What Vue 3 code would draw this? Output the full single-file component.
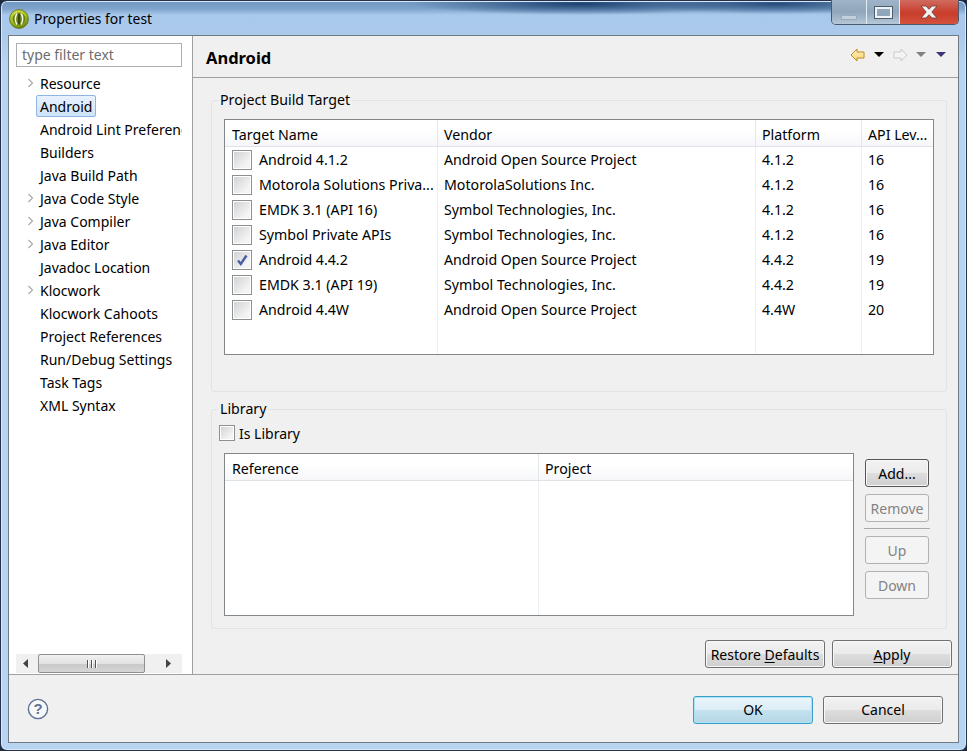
<template>
  <div class="window">
    <!-- Title bar -->
    <div class="titlebar">
      <svg class="app-icon" width="20" height="20" viewBox="0 0 20 20">
        <defs>
          <radialGradient id="orb" cx="40%" cy="25%" r="80%">
            <stop offset="0" stop-color="#dfe94f" />
            <stop offset="0.6" stop-color="#a3bf1a" />
            <stop offset="1" stop-color="#5b7a0c" />
          </radialGradient>
        </defs>
        <circle cx="10" cy="10" r="9.4" fill="url(#orb)" stroke="#5f6d14" stroke-width="0.8" />
        <circle cx="10" cy="10" r="6.4" fill="#69801a" />
        <path d="M8 4.5 C5.8 7.5 5.8 12.5 8 15.5" fill="none" stroke="#f4f7e4" stroke-width="1.5" />
        <path d="M12 4.5 C14.2 7.5 14.2 12.5 12 15.5" fill="none" stroke="#f4f7e4" stroke-width="1.5" />
        <path d="M10 5 V15" stroke="#3a4a0a" stroke-width="2" />
      </svg>
      <span class="title">Properties for test</span>
      <div class="win-controls">
        <div class="wc wc-min"><span class="min-glyph"></span></div>
        <div class="wc wc-max"><span class="max-glyph"></span></div>
        <div class="wc wc-close">
          <svg width="20" height="14" viewBox="0 0 20 14">
            <path d="M2 1 H7 L10 4.3 L13 1 H18 L12.8 7 L18 13 H13 L10 9.7 L7 13 H2 L7.2 7 Z" fill="#f1f1f1" stroke="#6d3a33" stroke-width="0.8" />
          </svg>
        </div>
      </div>
    </div>

    <div class="client">
      <div class="main">
        <!-- Left tree -->
        <aside class="sidebar">
          <div class="filter">type filter text</div>
          <ul class="tree">
            <li v-for="item in tree" :key="item.label" class="tree-row">
              <span class="twisty">
                <svg v-if="item.arrow" width="7" height="10" viewBox="0 0 7 10">
                  <path d="M1.5 1 L5.5 5 L1.5 9" fill="none" stroke="#a6a6a6" stroke-width="1.1" />
                </svg>
              </span>
              <span :class="['tree-label', { selected: item.selected }]">{{ item.label }}</span>
            </li>
          </ul>
          <div class="hscroll">
            <svg width="7" height="9" viewBox="0 0 7 9"><path d="M6 0 V9 L1 4.5 Z" fill="#444" /></svg>
            <div class="hthumb">
              <span class="grip"></span><span class="grip"></span><span class="grip"></span>
            </div>
            <svg width="7" height="9" viewBox="0 0 7 9"><path d="M1 0 V9 L6 4.5 Z" fill="#444" /></svg>
          </div>
        </aside>

        <!-- Right page -->
        <section class="page">
          <div class="page-head">
            <h1>Android</h1>
            <div class="page-tools">
              <svg width="15" height="14" viewBox="0 0 15 14">
                <defs>
                  <linearGradient id="back" x1="0" y1="0" x2="0" y2="1">
                    <stop offset="0" stop-color="#fff3c4" />
                    <stop offset="1" stop-color="#f9d270" />
                  </linearGradient>
                </defs>
                <path d="M7 1 L1 7 L7 13 V10 H14 V4 H7 Z" fill="url(#back)" stroke="#c08a1e" stroke-width="1" />
              </svg>
              <span class="caret black"></span>
              <svg class="fwd" width="15" height="14" viewBox="0 0 15 14">
                <path d="M8 1 L14 7 L8 13 V10 H1 V4 H8 Z" fill="#f4f4f4" stroke="#c9c9c9" stroke-width="1" />
              </svg>
              <span class="caret grey"></span>
              <span class="caret navy"></span>
            </div>
          </div>

          <div class="page-body">
            <fieldset class="group group-target">
              <legend>Project Build Target</legend>
              <div class="group-inner target-inner">
                <div class="table target-table">
                  <div class="thead target-cols">
                    <div v-for="c in targetCols" :key="c" class="th">{{ c }}</div>
                  </div>
                  <div class="tbody target-body">
                    <div class="guides target-cols">
                      <div v-for="c in targetCols" :key="c" class="guide"></div>
                    </div>
                    <div v-for="t in targets" :key="t.name" class="tr target-cols">
                      <div class="td name-cell">
                        <span :class="['check', { on: t.checked }]">
                          <svg v-if="t.checked" width="14" height="14" viewBox="0 0 14 14">
                            <path d="M3 7.5 L5.8 11 L11.5 2.5" fill="none" stroke="#4a5fa8" stroke-width="2.4" />
                          </svg>
                        </span>
                        {{ t.name }}
                      </div>
                      <div class="td">{{ t.vendor }}</div>
                      <div class="td">{{ t.platform }}</div>
                      <div class="td">{{ t.api }}</div>
                    </div>
                  </div>
                </div>
              </div>
            </fieldset>

            <fieldset class="group group-library">
              <legend>Library</legend>
              <div class="group-inner library-inner">
                <label class="is-library"><span class="check small"></span>Is Library</label>
                <div class="library-row">
                  <div class="table lib-table">
                    <div class="thead lib-cols">
                      <div class="th">Reference</div>
                      <div class="th">Project</div>
                    </div>
                    <div class="tbody lib-body lib-cols">
                      <div class="guide"></div>
                      <div class="guide"></div>
                    </div>
                  </div>
                  <div class="side-buttons">
                    <button class="btn btn-side btn-add">Add...</button>
                    <button class="btn btn-side" disabled>Remove</button>
                    <div class="side-sep"></div>
                    <button class="btn btn-side" disabled>Up</button>
                    <button class="btn btn-side" disabled>Down</button>
                  </div>
                </div>
              </div>
            </fieldset>
          </div>

          <div class="page-actions">
            <button class="btn btn-wide">Restore <u>D</u>efaults</button>
            <button class="btn btn-wide"><u>A</u>pply</button>
          </div>
        </section>
      </div>

      <!-- Footer -->
      <div class="footer">
        <svg class="help" width="22" height="22" viewBox="0 0 22 22">
          <circle cx="11" cy="11" r="9.6" fill="#f7f8fa" stroke="#5f7295" stroke-width="1.4" />
          <text x="11" y="16" text-anchor="middle" class="help-q">?</text>
        </svg>
        <div class="footer-buttons">
          <button class="btn btn-wide btn-default">OK</button>
          <button class="btn btn-wide">Cancel</button>
        </div>
      </div>
    </div>
  </div>
</template>

<script setup>
const tree = [
  { label: 'Resource', arrow: true },
  { label: 'Android', selected: true },
  { label: 'Android Lint Preferences' },
  { label: 'Builders' },
  { label: 'Java Build Path' },
  { label: 'Java Code Style', arrow: true },
  { label: 'Java Compiler', arrow: true },
  { label: 'Java Editor', arrow: true },
  { label: 'Javadoc Location' },
  { label: 'Klocwork', arrow: true },
  { label: 'Klocwork Cahoots' },
  { label: 'Project References' },
  { label: 'Run/Debug Settings' },
  { label: 'Task Tags' },
  { label: 'XML Syntax' },
]

const targetCols = ['Target Name', 'Vendor', 'Platform', 'API Lev...']

const targets = [
  { name: 'Android 4.1.2', vendor: 'Android Open Source Project', platform: '4.1.2', api: 16 },
  { name: 'Motorola Solutions Priva...', vendor: 'MotorolaSolutions Inc.', platform: '4.1.2', api: 16 },
  { name: 'EMDK 3.1 (API 16)', vendor: 'Symbol Technologies, Inc.', platform: '4.1.2', api: 16 },
  { name: 'Symbol Private APIs', vendor: 'Symbol Technologies, Inc.', platform: '4.1.2', api: 16 },
  { name: 'Android 4.4.2', vendor: 'Android Open Source Project', platform: '4.4.2', api: 19, checked: true },
  { name: 'EMDK 3.1 (API 19)', vendor: 'Symbol Technologies, Inc.', platform: '4.4.2', api: 19 },
  { name: 'Android 4.4W', vendor: 'Android Open Source Project', platform: '4.4W', api: 20 },
]
</script>

<style>
html, body { margin: 0; background: #1d2a3d; overflow: hidden; }
</style>

<style scoped>
* { box-sizing: border-box; }

.window {
  width: 967px;
  height: 751px;
  padding: 0 7px 7px 7px;
  display: flex;
  flex-direction: column;
  border: 1px solid #25324a;
  border-radius: 7px;
  background:
    radial-gradient(ellipse 170px 11px at 580px 3px, rgba(24, 62, 108, 0.95), transparent),
    radial-gradient(ellipse 130px 10px at 775px 3px, rgba(24, 62, 108, 0.85), transparent),
    linear-gradient(#6f97c2 0, #7fa4cc 8px, #a9c9ec 14px, #abc9ea 34px, #b7d4f0 60px, #b7d4f0 100%);
  font-family: "Noto Sans", sans-serif;
  font-size: 14px;
  color: #000;
  box-shadow: inset 0 0 0 1px #d7e8f8;
}

/* TITLE BAR */
.titlebar {
  height: 34px;
  flex: none;
  display: flex;
  align-items: center;
  position: relative;
}
.app-icon { margin: 2px 0 0 1px; }
.title { margin-left: 5px; color: #000; font-size: 13.9px; }
.win-controls {
  position: absolute;
  top: -1px;
  right: 0;
  display: flex;
  height: 25px;
  border: 1px solid #4a5a6c;
  border-top: none;
  border-radius: 0 0 5px 5px;
  overflow: hidden;
}
.wc { display: flex; align-items: center; justify-content: center; }
.wc-min, .wc-max {
  width: 35px;
  background: linear-gradient(#9fb4c8, #8fa6bb 50%, #b6c8d8);
  border-right: 1px solid #e4ecf3;
}
.wc-max { width: 33px; }
.wc-close { width: 58px; background: linear-gradient(#cf6b5e, #c93c2a 55%, #d3533f); }
.min-glyph { width: 16px; height: 5px; margin-top: 10px; background: #c2d0dd; border: 1px solid #9aaabb; }
.max-glyph { width: 17px; height: 11px; border: 2px solid #eef3f7; outline: 1px solid #4d5d6e; background: #8fa6bb; }

/* CLIENT */
.client {
  flex: 1;
  display: flex;
  flex-direction: column;
  min-height: 0;
  background: #f0f0f0;
  border: 1px solid #6f7a85;
}
.main { flex: 1; display: flex; min-height: 0; }

/* SIDEBAR */
.sidebar {
  width: 184px;
  flex: none;
  background: #fff;
  border-right: 1px solid #a0a0a0;
  padding: 7px 9px 1px 7px;
  display: flex;
  flex-direction: column;
  overflow: hidden;
}
.filter {
  height: 24px;
  width: 166px;
  flex: none;
  border: 1px solid #abadb3;
  padding-left: 5px;
  line-height: 22px;
  color: #6d6d6d;
}
.tree { list-style: none; margin: 4px 0 0 0; padding: 0; flex: 1; min-height: 0; width: 166px; overflow: hidden; }
.tree-row { height: 23px; display: flex; align-items: center; white-space: nowrap; }
.twisty { width: 20px; flex: none; padding-left: 11px; display: flex; align-items: center; }
.tree-label { padding: 0 3px; line-height: 21px; height: 22px; border: 1px solid transparent; border-radius: 2px; }
.tree-label.selected { background: linear-gradient(#e8f2fd, #cfe3fb); border-color: #8fb6e3; }

.hscroll {
  height: 19px;
  width: 166px;
  flex: none;
  background: #f0f0f0;
  display: flex;
  align-items: center;
  justify-content: space-between;
  padding: 0 10px 0 6px;
}
.hthumb {
  width: 107px;
  height: 19px;
  margin-left: 9px;
  margin-right: auto;
  border: 1px solid #8e8f8f;
  border-radius: 2px;
  background: linear-gradient(#f1f1f1, #e2e2e2 50%, #c9c9c9 55%, #d6d6d6);
  display: flex;
  align-items: center;
  justify-content: center;
  gap: 2px;
}
.grip { width: 1px; height: 8px; background: #555; border-right: 1px solid #fff; box-sizing: content-box; }

/* PAGE */
.page { flex: 1; min-width: 0; display: flex; flex-direction: column; }
.page-head {
  height: 42px;
  flex: none;
  display: flex;
  align-items: center;
  justify-content: space-between;
  padding: 0 12px 0 13px;
  border-bottom: 1px solid #a0a0a0;
}
h1 { margin: 2px 0 0; font-size: 16.5px; font-weight: 700; color: #000; }
.page-tools { display: flex; align-items: center; margin-top: -4px; }
.caret { width: 0; height: 0; border-left: 5px solid transparent; border-right: 5px solid transparent; margin-left: 9px; }
.caret.black { border-top: 5px solid #000; }
.caret.grey { border-top: 5px solid #808080; margin-left: 8px; }
.caret.navy { border-top: 5px solid #3a3578; margin-left: 10px; }
.fwd { margin-left: 9px; }

.page-body { flex: none; padding: 13px 11px 0 18px; font-size: 14px; }
.group {
  margin: 0;
  padding: 0;
  border: 1px solid #dfe4e8;
  border-radius: 3px;
  min-width: 0;
}
.group legend { margin-left: 6px; padding: 0 2px; line-height: 18px; font-size: 14.2px; }
.group-target { height: 301px; }
.target-inner { padding: 10px 12px 0 12px; }
.group-library { height: 229px; margin-top: 8px; }
.library-inner { padding: 0 17px 0 7px; }

/* TABLES */
.table { border: 1px solid #82878c; background: #fff; display: flex; flex-direction: column; font-size: 14.2px; }
.target-table { height: 236px; }
.thead { height: 27px; flex: none; background: linear-gradient(#fff, #fff 40%, #f6f7f9); border-bottom: 1px solid #dfe3e8; }
.th { padding-left: 6px; line-height: 30px; border-right: 1px solid #e3e6ea; white-space: nowrap; overflow: hidden; }
.th:first-child { padding-left: 7px; }
.th:last-child { border-right: none; }
.target-cols { display: grid; grid-template-columns: 213px 318px 106px 72px; }
.lib-cols { display: grid; grid-template-columns: 314px 1fr; }
.tbody { flex: 1; position: relative; }
.guides { position: absolute; inset: 0; pointer-events: none; }
.guide { border-right: 1px solid #edf0f3; }
.guide:last-child { border-right: none; }
.tr { height: 25px; position: relative; }
.td { padding-left: 6px; line-height: 25px; white-space: nowrap; }
.name-cell { display: flex; align-items: center; padding-left: 7px; }

.check {
  width: 20px;
  height: 20px;
  flex: none;
  margin-right: 7px;
  border: 1px solid #8e8f8f;
  outline: 1px solid #fff;
  outline-offset: -2px;
  background: linear-gradient(135deg, #cfd0d2, #f4f4f5 75%);
  display: flex;
  align-items: center;
  justify-content: center;
}
.check.small { width: 16px; height: 16px; margin-right: 4px; }

.is-library { display: flex; align-items: center; height: 18px; margin-top: 6px; }
.library-row { display: flex; margin: 11px 0 0 5px; gap: 11px; }
.lib-table { width: 630px; height: 163px; }
.side-buttons { width: 64px; display: flex; flex-direction: column; padding-top: 6px; }
.side-buttons .btn { margin-bottom: 7px; }
.side-sep { height: 1px; margin: -1px -1px 7px -1px; background: #a8a8a8; }

/* BUTTONS */
.btn {
  font: inherit;
  color: #000;
  padding: 0;
  border: 1px solid #707070;
  border-radius: 3px;
  background: linear-gradient(#f2f2f2, #ebebeb 48%, #dddddd 52%, #cfcfcf);
  box-shadow: inset 0 0 0 1px #f8f8f8;
}
.btn u { text-decoration: underline; text-underline-offset: 2px; }
.btn:disabled { background: #f4f4f4; border-color: #adb2b5; color: #838383; box-shadow: none; }
.btn-side { width: 64px; height: 28px; display: block; }
.btn-add { border-color: #555; }
.btn-wide { width: 120px; height: 28px; }
.btn-default {
  border-color: #3c9fc9;
  background: linear-gradient(#eaf6fb, #dcedf6 48%, #c4e2ef 52%, #b5d6e6);
  box-shadow: inset 0 0 0 1px #a8e4f6;
}

.page-actions {
  flex: none;
  display: flex;
  justify-content: flex-end;
  gap: 7px;
  padding: 11px 6px 0 0;
}

/* FOOTER */
.footer {
  height: 68px;
  flex: none;
  border-top: 1px solid #a0a0a0;
  display: flex;
  align-items: center;
  justify-content: space-between;
  padding: 0 15px 0 18px;
}
.footer-buttons { display: flex; gap: 10px; margin-top: 2px; }
.help-q { font-family: "Liberation Sans", sans-serif; font-size: 15px; font-weight: 700; fill: #5f7295; }
</style>
